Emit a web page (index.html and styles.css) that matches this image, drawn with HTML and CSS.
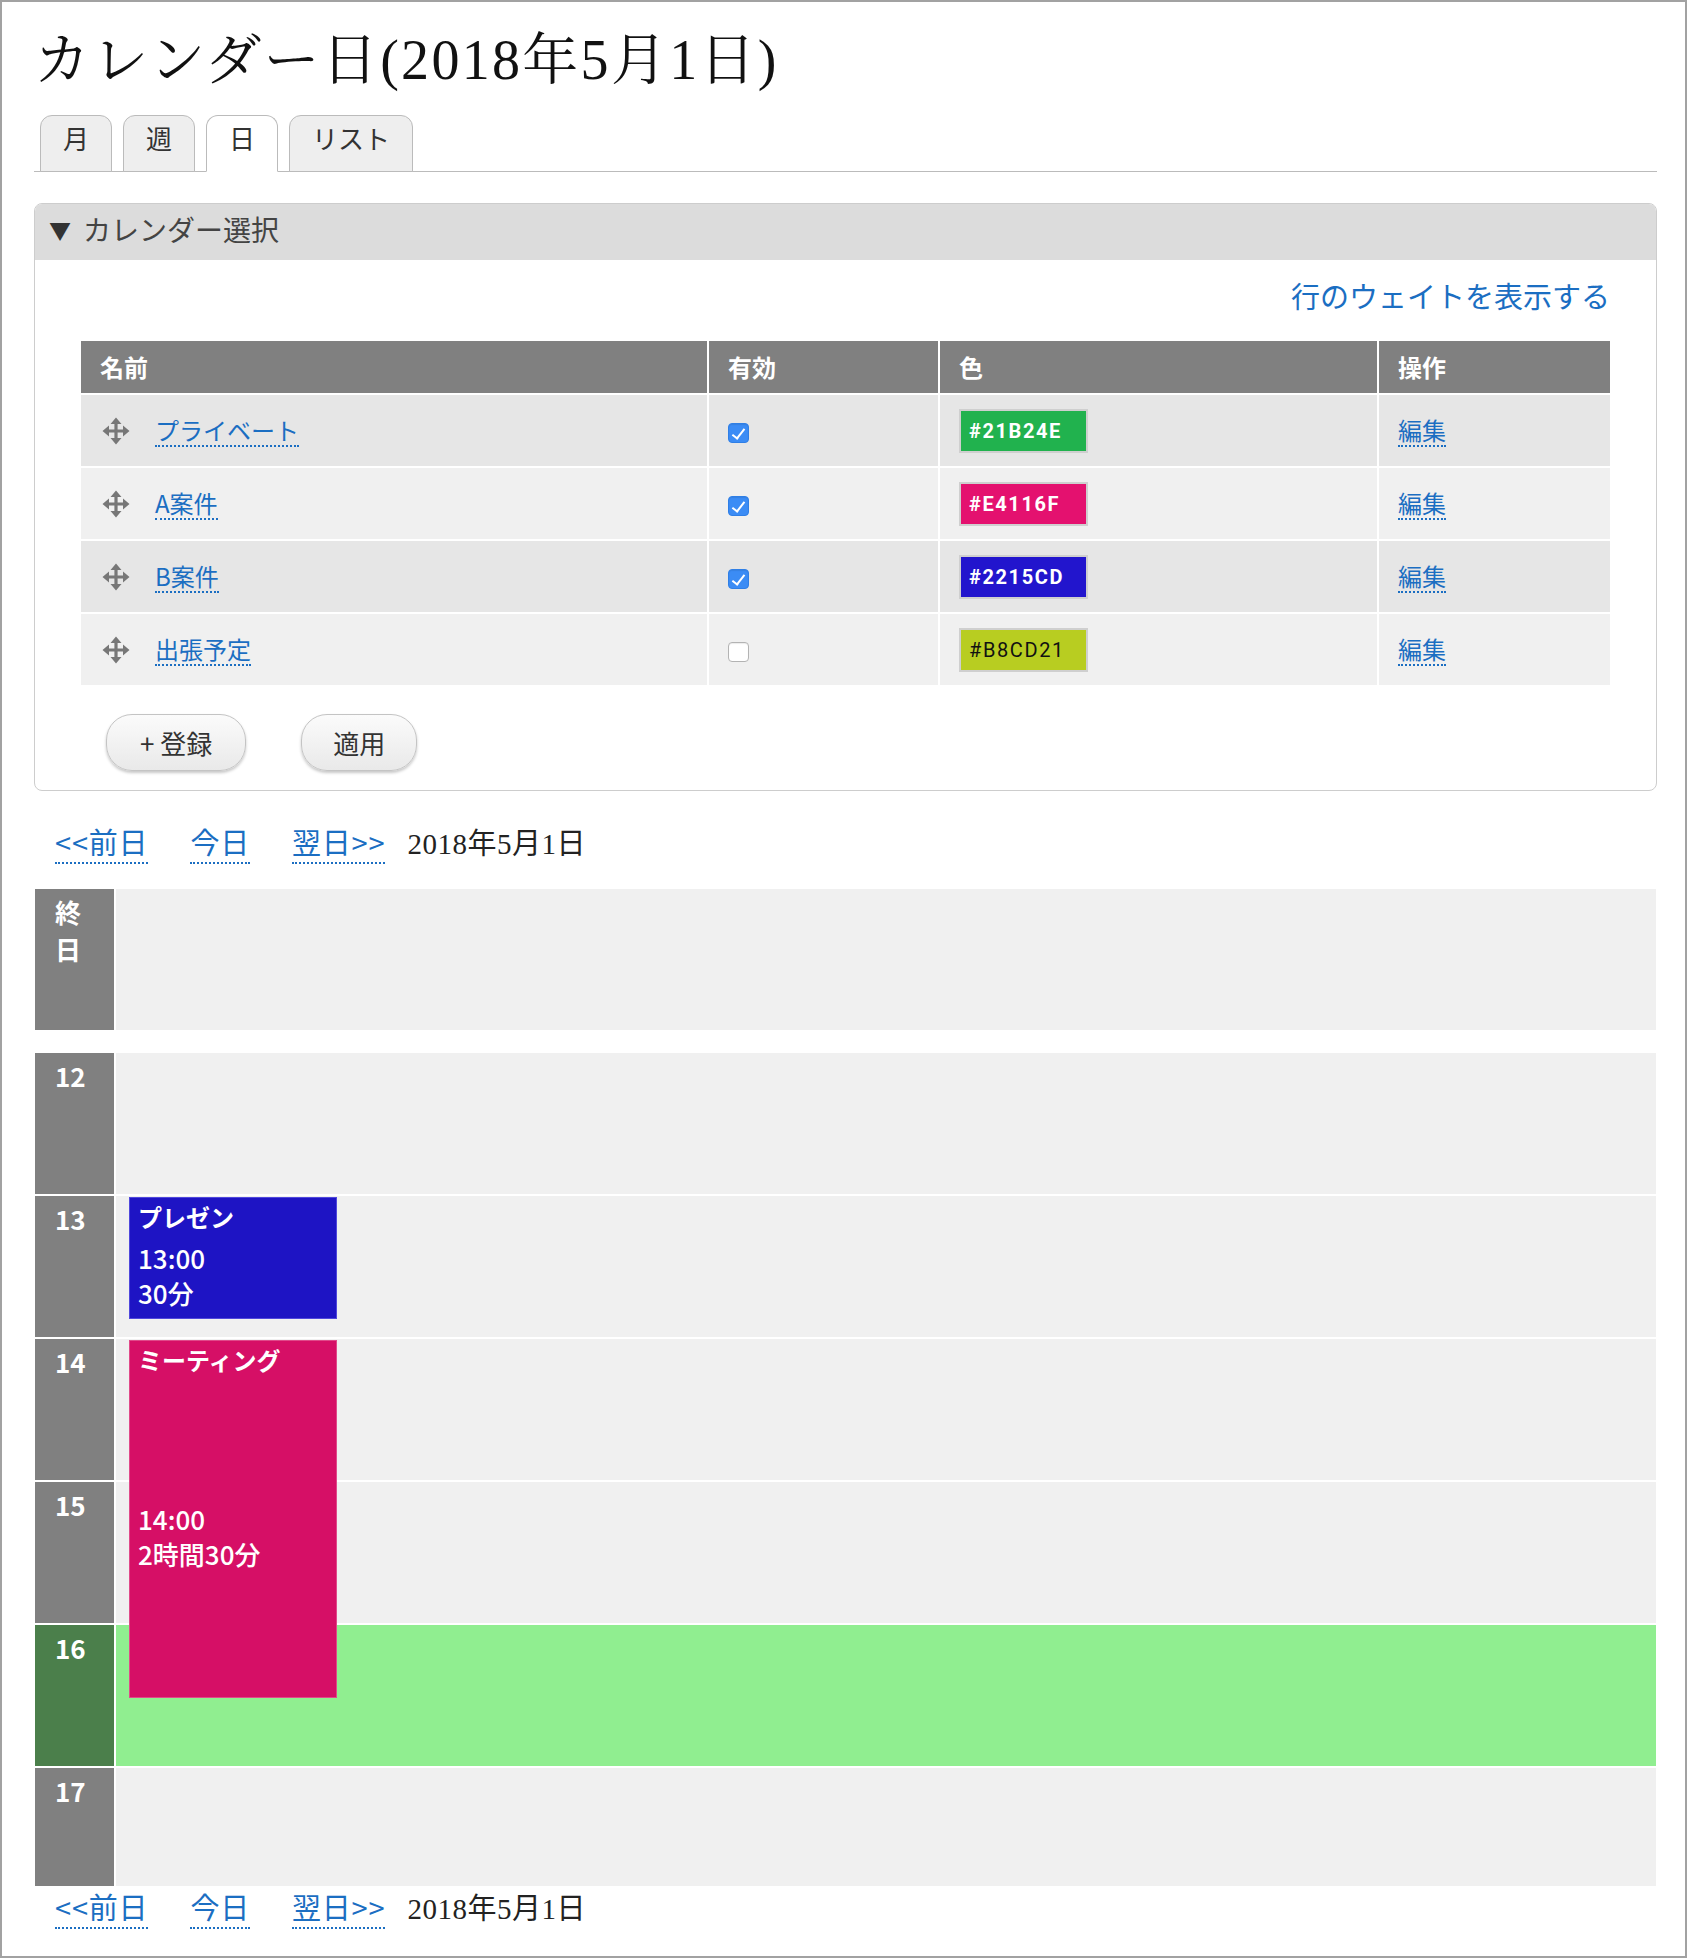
FILE: index.html
```html
<!DOCTYPE html>
<html lang="ja">
<head>
<meta charset="utf-8">
<title>カレンダー日(2018年5月1日)</title>
<link rel="stylesheet" href="styles.css">
</head>
<body>
<div class="page">
  <h1 class="title">カレンダー日(2018年5月1日)</h1>

  <div class="tabs">
    <a class="tab">月</a>
    <a class="tab">週</a>
    <a class="tab active">日</a>
    <a class="tab">リスト</a>
  </div>

  <div class="panel">
    <div class="panel-head"><span class="tri">▼</span>カレンダー選択</div>
    <div class="panel-body">
      <div class="weight-row"><a class="weight-link">行のウェイトを表示する</a></div>
      <table class="cal-table">
        <colgroup>
          <col class="c-name"><col class="c-valid"><col class="c-color"><col class="c-op">
        </colgroup>
        <thead>
          <tr><th>名前</th><th>有効</th><th>色</th><th>操作</th></tr>
        </thead>
        <tbody>
          <tr class="odd">
            <td><div class="cell"><svg class="move" viewBox="0 0 28 28"><path d="M14 0.5 L19.5 7 H15.6 V12.4 H21 V8.5 L27.5 14 L21 19.5 V15.6 H15.6 V21 H19.5 L14 27.5 L8.5 21 H12.4 V15.6 H7 V19.5 L0.5 14 L7 8.5 V12.4 H12.4 V7 H8.5 Z"/></svg><a class="dlink">プライベート</a></div></td>
            <td><div class="cell"><input type="checkbox" class="cb" checked></div></td>
            <td><div class="cell"><span class="swatch sw-green">#21B24E</span></div></td>
            <td><div class="cell"><a class="dlink">編集</a></div></td>
          </tr>
          <tr class="even">
            <td><div class="cell"><svg class="move" viewBox="0 0 28 28"><path d="M14 0.5 L19.5 7 H15.6 V12.4 H21 V8.5 L27.5 14 L21 19.5 V15.6 H15.6 V21 H19.5 L14 27.5 L8.5 21 H12.4 V15.6 H7 V19.5 L0.5 14 L7 8.5 V12.4 H12.4 V7 H8.5 Z"/></svg><a class="dlink">A案件</a></div></td>
            <td><div class="cell"><input type="checkbox" class="cb" checked></div></td>
            <td><div class="cell"><span class="swatch sw-pink">#E4116F</span></div></td>
            <td><div class="cell"><a class="dlink">編集</a></div></td>
          </tr>
          <tr class="odd">
            <td><div class="cell"><svg class="move" viewBox="0 0 28 28"><path d="M14 0.5 L19.5 7 H15.6 V12.4 H21 V8.5 L27.5 14 L21 19.5 V15.6 H15.6 V21 H19.5 L14 27.5 L8.5 21 H12.4 V15.6 H7 V19.5 L0.5 14 L7 8.5 V12.4 H12.4 V7 H8.5 Z"/></svg><a class="dlink">B案件</a></div></td>
            <td><div class="cell"><input type="checkbox" class="cb" checked></div></td>
            <td><div class="cell"><span class="swatch sw-blue">#2215CD</span></div></td>
            <td><div class="cell"><a class="dlink">編集</a></div></td>
          </tr>
          <tr class="even">
            <td><div class="cell"><svg class="move" viewBox="0 0 28 28"><path d="M14 0.5 L19.5 7 H15.6 V12.4 H21 V8.5 L27.5 14 L21 19.5 V15.6 H15.6 V21 H19.5 L14 27.5 L8.5 21 H12.4 V15.6 H7 V19.5 L0.5 14 L7 8.5 V12.4 H12.4 V7 H8.5 Z"/></svg><a class="dlink">出張予定</a></div></td>
            <td><div class="cell"><input type="checkbox" class="cb"></div></td>
            <td><div class="cell"><span class="swatch sw-lime">#B8CD21</span></div></td>
            <td><div class="cell"><a class="dlink">編集</a></div></td>
          </tr>
        </tbody>
      </table>
      <div class="buttons">
        <button class="btn btn-add">+ 登録</button>
        <button class="btn">適用</button>
      </div>
    </div>
  </div>

  <div class="daynav">
    <a class="nlink n1">&lt;&lt;前日</a><a class="nlink n2">今日</a><a class="nlink n3">翌日&gt;&gt;</a><span class="date">2018年5月1日</span>
  </div>

  <div class="cal">
    <div class="allday">
      <div class="hlabel">終日</div>
      <div class="hcell"></div>
    </div>
    <div class="hours">
      <div class="hlabel">12</div><div class="hcell"></div>
      <div class="hlabel">13</div><div class="hcell"></div>
      <div class="hlabel">14</div><div class="hcell"></div>
      <div class="hlabel">15</div><div class="hcell"></div>
      <div class="hlabel now">16</div><div class="hcell now"></div>
      <div class="hlabel">17</div><div class="hcell"></div>

      <div class="event ev-blue ev-prezen">
        <div class="ev-title">プレゼン</div>
        <div class="ev-time">13:00<br>30分</div>
      </div>
      <div class="event ev-pink ev-meeting">
        <div class="ev-title">ミーティング</div>
        <div class="ev-time">14:00<br>2時間30分</div>
      </div>
    </div>
  </div>

  <div class="daynav bottom">
    <a class="nlink n1">&lt;&lt;前日</a><a class="nlink n2">今日</a><a class="nlink n3">翌日&gt;&gt;</a><span class="date">2018年5月1日</span>
  </div>
</div>
</body>
</html>
```

FILE: styles.css
```css
* { box-sizing: border-box; }

html, body {
  margin: 0;
  padding: 0;
  background: #fff;
}

body {
  font-family: "Noto Sans CJK JP", sans-serif;
  color: #333;
}

.page {
  width: 1687px;
  height: 1958px;
  border: 2px solid #a2a2a2;
  padding: 0 28px 0 32px;
  overflow: hidden;
}

/* title */
.title {
  margin: 26px 0 0 0;
  padding-left: 0;
  font-family: "Liberation Serif", "Noto Serif CJK JP", "Noto Sans CJK JP", serif;
  font-weight: normal;
  font-size: 56px;
  line-height: 64px;
  letter-spacing: 2.3px;
  color: #111;
}

/* tabs */
.tabs {
  display: flex;
  gap: 11px;
  margin-top: 23px;
  padding-left: 6px;
  border-bottom: 1px solid #bbb;
}

.tab {
  height: 57px;
  margin-bottom: -1px;
  border: 1px solid #bbb;
  border-radius: 12px 12px 0 0;
  background: #eee;
  padding: 0 22px;
  font-size: 26px;
  line-height: 44px;
  color: #333;
}

.tab.active {
  background: #fff;
  border-bottom-color: #fff;
}

/* panel */
.panel {
  margin-top: 31px;
  border: 1px solid #cdcdcd;
  border-radius: 8px;
  overflow: hidden;
}

.panel-head {
  height: 56px;
  background: #dcdcdc;
  padding-left: 14px;
  font-size: 28px;
  line-height: 50px;
  color: #444;
}

.panel-head .tri {
  display: inline-block;
  font-size: 22px;
  width: 34px;
  color: #333;
  vertical-align: top;
}

.panel-body {
  padding: 15px 46px 19px 46px;
}

.weight-row {
  text-align: right;
  font-size: 29px;
  line-height: 40px;
}

.weight-link {
  color: #1b6ec2;
}

/* table */
.cal-table {
  margin-top: 26px;
  width: 1529px;
  table-layout: fixed;
  border-collapse: separate;
  border-spacing: 0;
  font-size: 24px;
}

.c-name { width: 626px; }
.c-valid { width: 231px; }
.c-color { width: 439px; }
.c-op { width: 233px; }

.cal-table th {
  height: 52px;
  padding: 0 0 0 19px;
  background: #808080;
  color: #fff;
  font-weight: bold;
  text-align: left;
  vertical-align: middle;
  line-height: 30px;
}

.cal-table th + th,
.cal-table td + td {
  border-left: 2px solid #fff;
}

.cal-table td {
  padding: 0 0 0 19px;
  border-top: 2px solid #fff;
}

.cal-table tr.odd td { background: #e6e6e6; }
.cal-table tr.even td { background: #f0f0f0; }

.cell {
  height: 71px;
  display: flex;
  align-items: center;
}

.move {
  width: 28px;
  height: 28px;
  margin-left: 2px;
  margin-right: 25px;
  fill: #777;
  flex: none;
}

.dlink {
  color: #1b6ec2;
  line-height: 30px;
  border-bottom: 2px dotted #1b6ec2;
}

.cb {
  appearance: none;
  -webkit-appearance: none;
  width: 21px;
  height: 20px;
  margin: 4px 0 0 0;
  border: 1px solid #b3b3b3;
  border-radius: 4px;
  background: #fff;
  position: relative;
  box-shadow: inset 0 1px 1px rgba(0,0,0,0.08);
}

.cb:checked {
  background: #3b8cf5;
  border-color: #2f7fe6;
}

.cb:checked::after {
  content: "";
  position: absolute;
  left: 6px;
  top: 2px;
  width: 5px;
  height: 11px;
  border: solid #fff;
  border-width: 0 2.5px 2.5px 0;
  transform: rotate(38deg);
}

.swatch {
  display: block;
  width: 129px;
  height: 44px;
  border: 2px solid #cfcfcf;
  padding-left: 8px;
  font-family: Roboto, "Liberation Sans", sans-serif;
  font-weight: bold;
  font-size: 20px;
  line-height: 40px;
  letter-spacing: 1.6px;
  color: #fff;
}

.sw-green { background: #21B24E; }
.sw-pink { background: #E4116F; }
.sw-blue { background: #2215CD; }
.sw-lime { background: #B8CD21; color: #111; font-weight: normal; }

/* buttons */
.buttons {
  display: flex;
  gap: 55px;
  margin-top: 29px;
  padding-left: 25px;
}

.btn {
  height: 57px;
  padding: 0 31px;
  border: 1px solid #c4c4c4;
  border-radius: 26px;
  background: linear-gradient(#fbfbfb, #e9e9e9);
  box-shadow: 0 2px 3px rgba(0,0,0,0.22);
  font-family: "Noto Sans CJK JP", sans-serif;
  font-size: 26px;
  color: #333;
}

.btn-add {
  padding: 0 33px;
}

/* day navigation */
.daynav {
  margin-top: 30px;
  padding-left: 21px;
  height: 40px;
  font-size: 29px;
  line-height: 40px;
  white-space: nowrap;
}

.daynav.bottom {
  margin-top: 0;
}

.nlink {
  color: #1b6ec2;
  border-bottom: 2px dotted #1b6ec2;
  letter-spacing: 0.8px;
}

.n1, .n2 { margin-right: 42px; }
.n3 { margin-right: 22px; }

.date {
  font-family: "Liberation Serif", "Noto Sans CJK JP", serif;
  color: #222;
  letter-spacing: 0.5px;
}

/* calendar */
.cal {
  margin: 28px 1px 0 1px;
}

.allday {
  display: grid;
  grid-template-columns: 79px 1fr;
  column-gap: 2px;
  height: 141px;
}

.hours {
  position: relative;
  display: grid;
  grid-template-columns: 79px 1fr;
  grid-template-rows: repeat(5, 141px) 118px;
  column-gap: 2px;
  row-gap: 2px;
  margin-top: 23px;
}

.hlabel {
  background: #808080;
  color: #fff;
  font-weight: bold;
  font-size: 26px;
  line-height: 37px;
  padding: 4px 14px 0 20px;
}

.hcell {
  background: #f0f0f0;
}

.hlabel.now { background: #4b7f4b; }
.hcell.now { background: #90ee90; }

/* events */
.event {
  position: absolute;
  left: 94px;
  width: 208px;
  display: flex;
  flex-direction: column;
  padding: 2px 8px 2px 8px;
  color: #fff;
}

.ev-blue {
  background: #1e14c4;
  border: 1px solid #5048dc;
}

.ev-pink {
  background: #d60f66;
  border: 1px solid #e04a8a;
}

.ev-prezen { top: 144px; height: 122px; }
.ev-meeting { top: 287px; height: 358px; }

.ev-title {
  font-size: 24px;
  font-weight: bold;
  line-height: 34px;
}

.ev-time {
  margin: auto 0;
  font-size: 26px;
  font-weight: 500;
  line-height: 35px;
}
```
